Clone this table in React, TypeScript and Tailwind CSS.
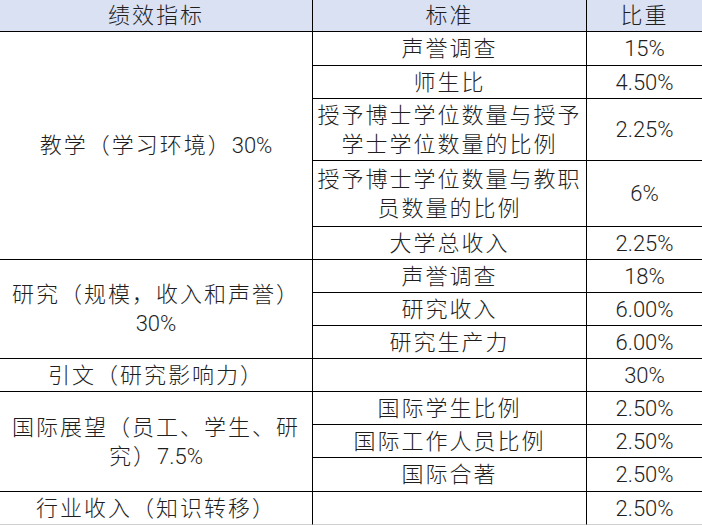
import React from "react"

const cjk = "font-['Liberation_Sans','Noto_Sans_CJK_SC',sans-serif]"
const num = "font-['Roboto','Liberation_Sans',sans-serif] font-light tracking-normal"

function Cell({ className, children }: { className: string; children?: React.ReactNode }) {
    return (
        <div className={`flex items-center justify-center text-center border-b border-black text-[22px] leading-[29px] text-[#1e1e1e] ${className}`}>
            {children}
        </div>
    )
}

export default function App() {
    return (
        <div className={`w-[702px] h-[525px] overflow-hidden bg-white ${cjk}`}>
            <div className="grid grid-cols-[313px_274px_115px] grid-rows-[32px_34px_33px_62px_66px_33px_33px_33px_33px_33px_33px_33px_34px_33px]">
                {/* header */}
                <Cell className="col-start-1 row-start-1 border-r bg-[#d9e1f2] tracking-[2px] font-light">绩效指标</Cell>
                <Cell className="col-start-2 row-start-1 border-r bg-[#d9e1f2] tracking-[2px] font-light">标准</Cell>
                <Cell className="col-start-3 row-start-1 bg-[#d9e1f2] tracking-[2px] font-light">比重</Cell>

                {/* 第一列 */}
                <Cell className="col-start-1 row-start-2 row-span-5 border-r tracking-[2px] font-light">
                    <span>教学（学习环境）<span className={num}>30%</span></span>
                </Cell>
                <Cell className="col-start-1 row-start-7 row-span-3 border-r tracking-[2px] font-light">
                    <span>研究（规模，收入和声誉）<br /><span className={num}>30%</span></span>
                </Cell>
                <Cell className="col-start-1 row-start-10 border-r tracking-[2px] font-light">引文（研究影响力）</Cell>
                <Cell className="col-start-1 row-start-11 row-span-3 border-r tracking-[2px] font-light">
                    <span>国际展望（员工、学生、研<br />究）<span className={num}>7.5%</span></span>
                </Cell>
                <Cell className="col-start-1 row-start-14 border-r border-b-[#d0d0d0] tracking-[2px] font-light">行业收入（知识转移）</Cell>

                {/* 标准 */}
                <Cell className="col-start-2 row-start-2 border-r tracking-[2px] font-light">声誉调查</Cell>
                <Cell className="col-start-2 row-start-3 border-r tracking-[2px] font-light">师生比</Cell>
                <Cell className="col-start-2 row-start-4 border-r tracking-[2px] font-light">
                    <span>授予博士学位数量与授予<br />学士学位数量的比例</span>
                </Cell>
                <Cell className="col-start-2 row-start-5 border-r tracking-[2px] font-light">
                    <span>授予博士学位数量与教职<br />员数量的比例</span>
                </Cell>
                <Cell className="col-start-2 row-start-6 border-r tracking-[2px] font-light">大学总收入</Cell>
                <Cell className="col-start-2 row-start-7 border-r tracking-[2px] font-light">声誉调查</Cell>
                <Cell className="col-start-2 row-start-8 border-r tracking-[2px] font-light">研究收入</Cell>
                <Cell className="col-start-2 row-start-9 border-r tracking-[2px] font-light">研究生产力</Cell>
                <Cell className="col-start-2 row-start-10 border-r"></Cell>
                <Cell className="col-start-2 row-start-11 border-r tracking-[2px] font-light">国际学生比例</Cell>
                <Cell className="col-start-2 row-start-12 border-r tracking-[2px] font-light">国际工作人员比例</Cell>
                <Cell className="col-start-2 row-start-13 border-r tracking-[2px] font-light">国际合著</Cell>
                <Cell className="col-start-2 row-start-14 border-r border-b-[#d0d0d0]"></Cell>

                {/* 比重 */}
                <Cell className={`col-start-3 row-start-2 ${num}`}>15%</Cell>
                <Cell className={`col-start-3 row-start-3 ${num}`}>4.50%</Cell>
                <Cell className={`col-start-3 row-start-4 ${num}`}>2.25%</Cell>
                <Cell className={`col-start-3 row-start-5 ${num}`}>6%</Cell>
                <Cell className={`col-start-3 row-start-6 ${num}`}>2.25%</Cell>
                <Cell className={`col-start-3 row-start-7 ${num}`}>18%</Cell>
                <Cell className={`col-start-3 row-start-8 ${num}`}>6.00%</Cell>
                <Cell className={`col-start-3 row-start-9 ${num}`}>6.00%</Cell>
                <Cell className={`col-start-3 row-start-10 ${num}`}>30%</Cell>
                <Cell className={`col-start-3 row-start-11 ${num}`}>2.50%</Cell>
                <Cell className={`col-start-3 row-start-12 ${num}`}>2.50%</Cell>
                <Cell className={`col-start-3 row-start-13 ${num}`}>2.50%</Cell>
                <Cell className={`col-start-3 row-start-14 border-b-[#d0d0d0] ${num}`}>2.50%</Cell>
            </div>
        </div>
    )
}
